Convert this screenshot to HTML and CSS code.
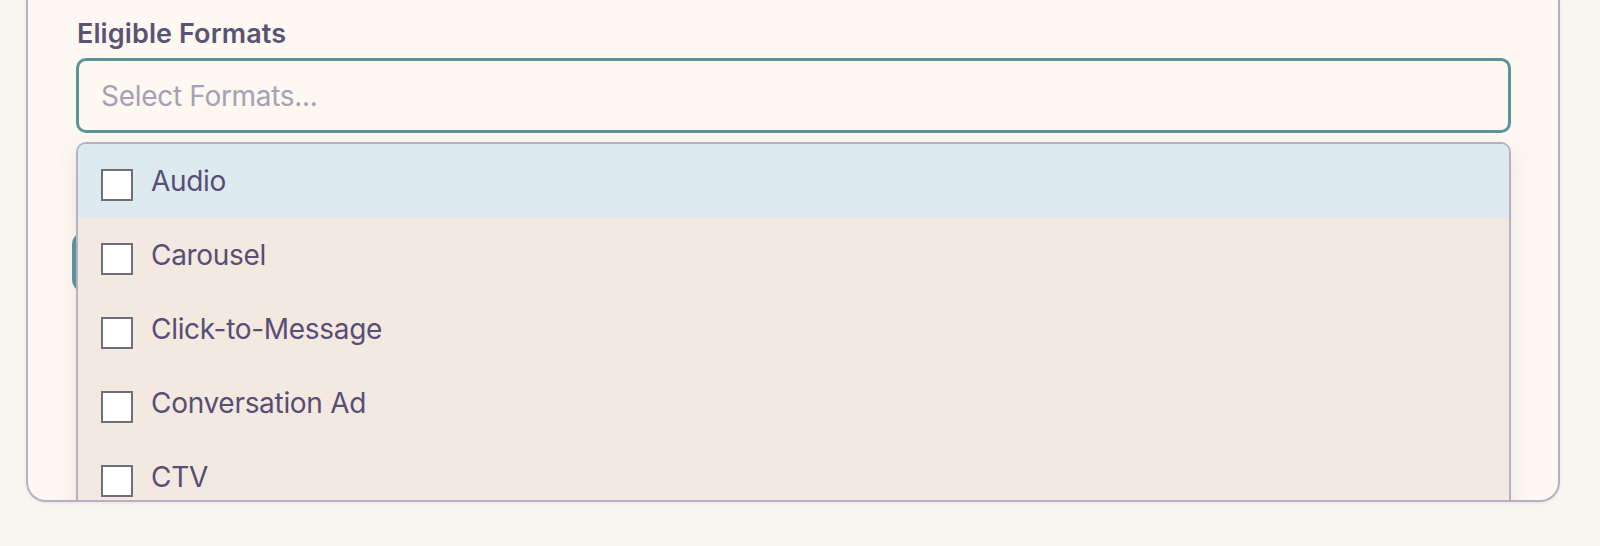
FILE: index.html
```html
<!DOCTYPE html>
<html lang="en">
<head>
<meta charset="utf-8">
<title>Eligible Formats</title>
<link rel="stylesheet" href="styles.css">
</head>
<body>
<div class="card">
  <div class="field">
    <label class="label" for="formats">Eligible Formats</label>
    <input id="formats" class="select-input" type="text" placeholder="Select Formats...">
  </div>
  <div class="after">
    <button class="teal-btn" type="button" aria-label="Continue"></button>
  </div>
  <div class="dropdown">
    <div class="option active"><span class="box"></span><span class="opt-text">Audio</span></div>
    <div class="option"><span class="box"></span><span class="opt-text">Carousel</span></div>
    <div class="option"><span class="box"></span><span class="opt-text">Click-to-Message</span></div>
    <div class="option"><span class="box"></span><span class="opt-text">Conversation Ad</span></div>
    <div class="option"><span class="box"></span><span class="opt-text">CTV</span></div>
  </div>
</div>
</body>
</html>
```
FILE: styles.css
```css
* { box-sizing: border-box; }
html, body { margin: 0; padding: 0; }
body {
  background: #f9f5ef;
  font-family: Inter, "Noto Sans", "Liberation Sans", sans-serif;
  width: 1600px;
  height: 546px;
  overflow: hidden;
}
.card {
  position: relative;
  margin-left: 26px;
  width: 1534px;
  height: 502px;
  background: #fdf8f2;
  border: 2px solid #b6b0c3;
  border-top: 0;
  border-radius: 0 0 20px 20px;
  overflow: hidden;
  padding: 18px 48px 0 48px;
  box-shadow: 0 1px 3px rgba(120, 110, 140, 0.12);
}
.field {
  display: flex;
  flex-direction: column;
}
.label {
  font-size: 27px;
  line-height: 31px;
  font-weight: 600;
  color: #5b5375;
  margin: 0 0 9px 1px;
  letter-spacing: 0.1px;
}
.select-input {
  height: 75px;
  width: 1435px;
  border: 3px solid #5e939a;
  border-radius: 10px;
  background: #fdf8f2;
  padding: 0 22px;
  font-family: inherit;
  font-size: 28px;
  letter-spacing: -0.3px;
  color: #574f75;
  outline: none;
}
.select-input::placeholder { color: #a6a1b4; }
.after {
  margin-top: 98px;
  margin-left: -4px;
}
.teal-btn {
  display: block;
  height: 62px;
  width: 260px;
  border: 0;
  border-radius: 14px;
  background: #5e939a;
}
.dropdown {
  position: absolute;
  left: 48px;
  top: 142px;
  width: 1435px;
  height: 420px;
  background: #f3e9e1;
  border: 2px solid #b6b0c3;
  border-radius: 10px;
  overflow: hidden;
  box-shadow: 0 8px 22px rgba(110, 90, 80, 0.12);
}
.option {
  display: flex;
  align-items: center;
  height: 74px;
  padding-left: 23px;
  gap: 18px;
}
.option.active { background: #ddebf1; }
.box {
  width: 32px;
  height: 32px;
  flex: none;
  background: #ffffff;
  border: 2px solid #6f6e7b;
  margin-top: 7px;
}
.opt-text {
  font-size: 28px;
  letter-spacing: -0.3px;
  color: #574f75;
}
```
